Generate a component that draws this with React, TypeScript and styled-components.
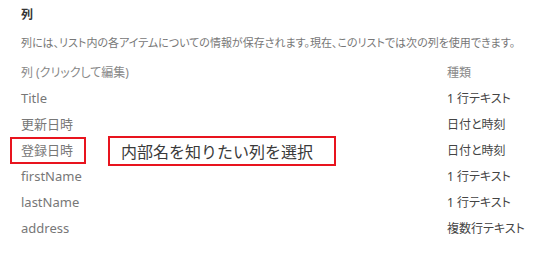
import React from 'react';
import styled, { createGlobalStyle } from 'styled-components';

const GlobalStyle = createGlobalStyle`
    html, body {
        margin: 0;
        padding: 0;
        background: #fff;
    }
    body {
        font-family: "Noto Sans", "Noto Sans CJK JP", sans-serif;
    }
`;

const Page = styled.div`
    width: 547px;
    height: 260px;
    padding: 6px 0 0 21px;
    box-sizing: border-box;
    overflow: hidden;
`;

const Heading = styled.h2`
    margin: 0;
    font-size: 12px;
    line-height: 18px;
    font-weight: 700;
    color: #333;
`;

const Description = styled.p`
    margin: 10px 0 0;
    font-size: 11px;
    line-height: 18px;
    color: #777;
    font-feature-settings: "palt";
    white-space: nowrap;
`;

const Table = styled.div`
    margin-top: 7px;
    display: grid;
    grid-template-columns: 426px auto;
    grid-auto-rows: 26px;
    align-items: center;
`;

const Row = styled.div`
    display: contents;
`;

const HeadCell = styled.div`
    font-size: 12px;
    color: #888;
    font-feature-settings: "palt";
`;

const NameCell = styled.div<{ $marked?: boolean }>`
    position: relative;
    font-size: 13px;
    color: #777;
    line-height: 26px;

    &::before {
        content: '';
        display: ${(p) => (p.$marked ? 'block' : 'none')};
        position: absolute;
        left: -11px;
        top: 0;
        width: 76px;
        height: 27px;
        border: 2px solid #e8141e;
        box-sizing: border-box;
    }
`;

const TypeCell = styled.div`
    font-size: 12px;
    color: #444;
    font-feature-settings: "palt";
`;

const Callout = styled.div`
    position: absolute;
    left: 87px;
    top: -1px;
    width: 228px;
    height: 30px;
    border: 2px solid #e8141e;
    box-sizing: border-box;
    padding-left: 11px;
    font-size: 16px;
    line-height: 26px;
    color: #3a3a3a;
    white-space: nowrap;
    font-family: "Noto Sans CJK JP", sans-serif;
`;

const columns = [
    { name: 'Title', type: '1 行テキスト' },
    { name: '更新日時', type: '日付と時刻' },
    { name: '登録日時', type: '日付と時刻', marked: true },
    { name: 'firstName', type: '1 行テキスト' },
    { name: 'lastName', type: '1 行テキスト' },
    { name: 'address', type: '複数行テキスト' },
];

const App = () => {
    return (
        <>
            <GlobalStyle />
            <Page>
                <Heading>列</Heading>
                <Description>
                    列には、リスト内の各アイテムについての情報が保存されます。現在、このリストでは次の列を使用できます。
                </Description>
                <Table>
                    <Row>
                        <HeadCell>列 (クリックして編集)</HeadCell>
                        <HeadCell>種類</HeadCell>
                    </Row>
                    {columns.map((c) => (
                        <Row key={c.name}>
                            <NameCell $marked={c.marked}>
                                {c.name}
                                {c.marked && <Callout>内部名を知りたい列を選択</Callout>}
                            </NameCell>
                            <TypeCell>{c.type}</TypeCell>
                        </Row>
                    ))}
                </Table>
            </Page>
        </>
    );
};

export default App;
